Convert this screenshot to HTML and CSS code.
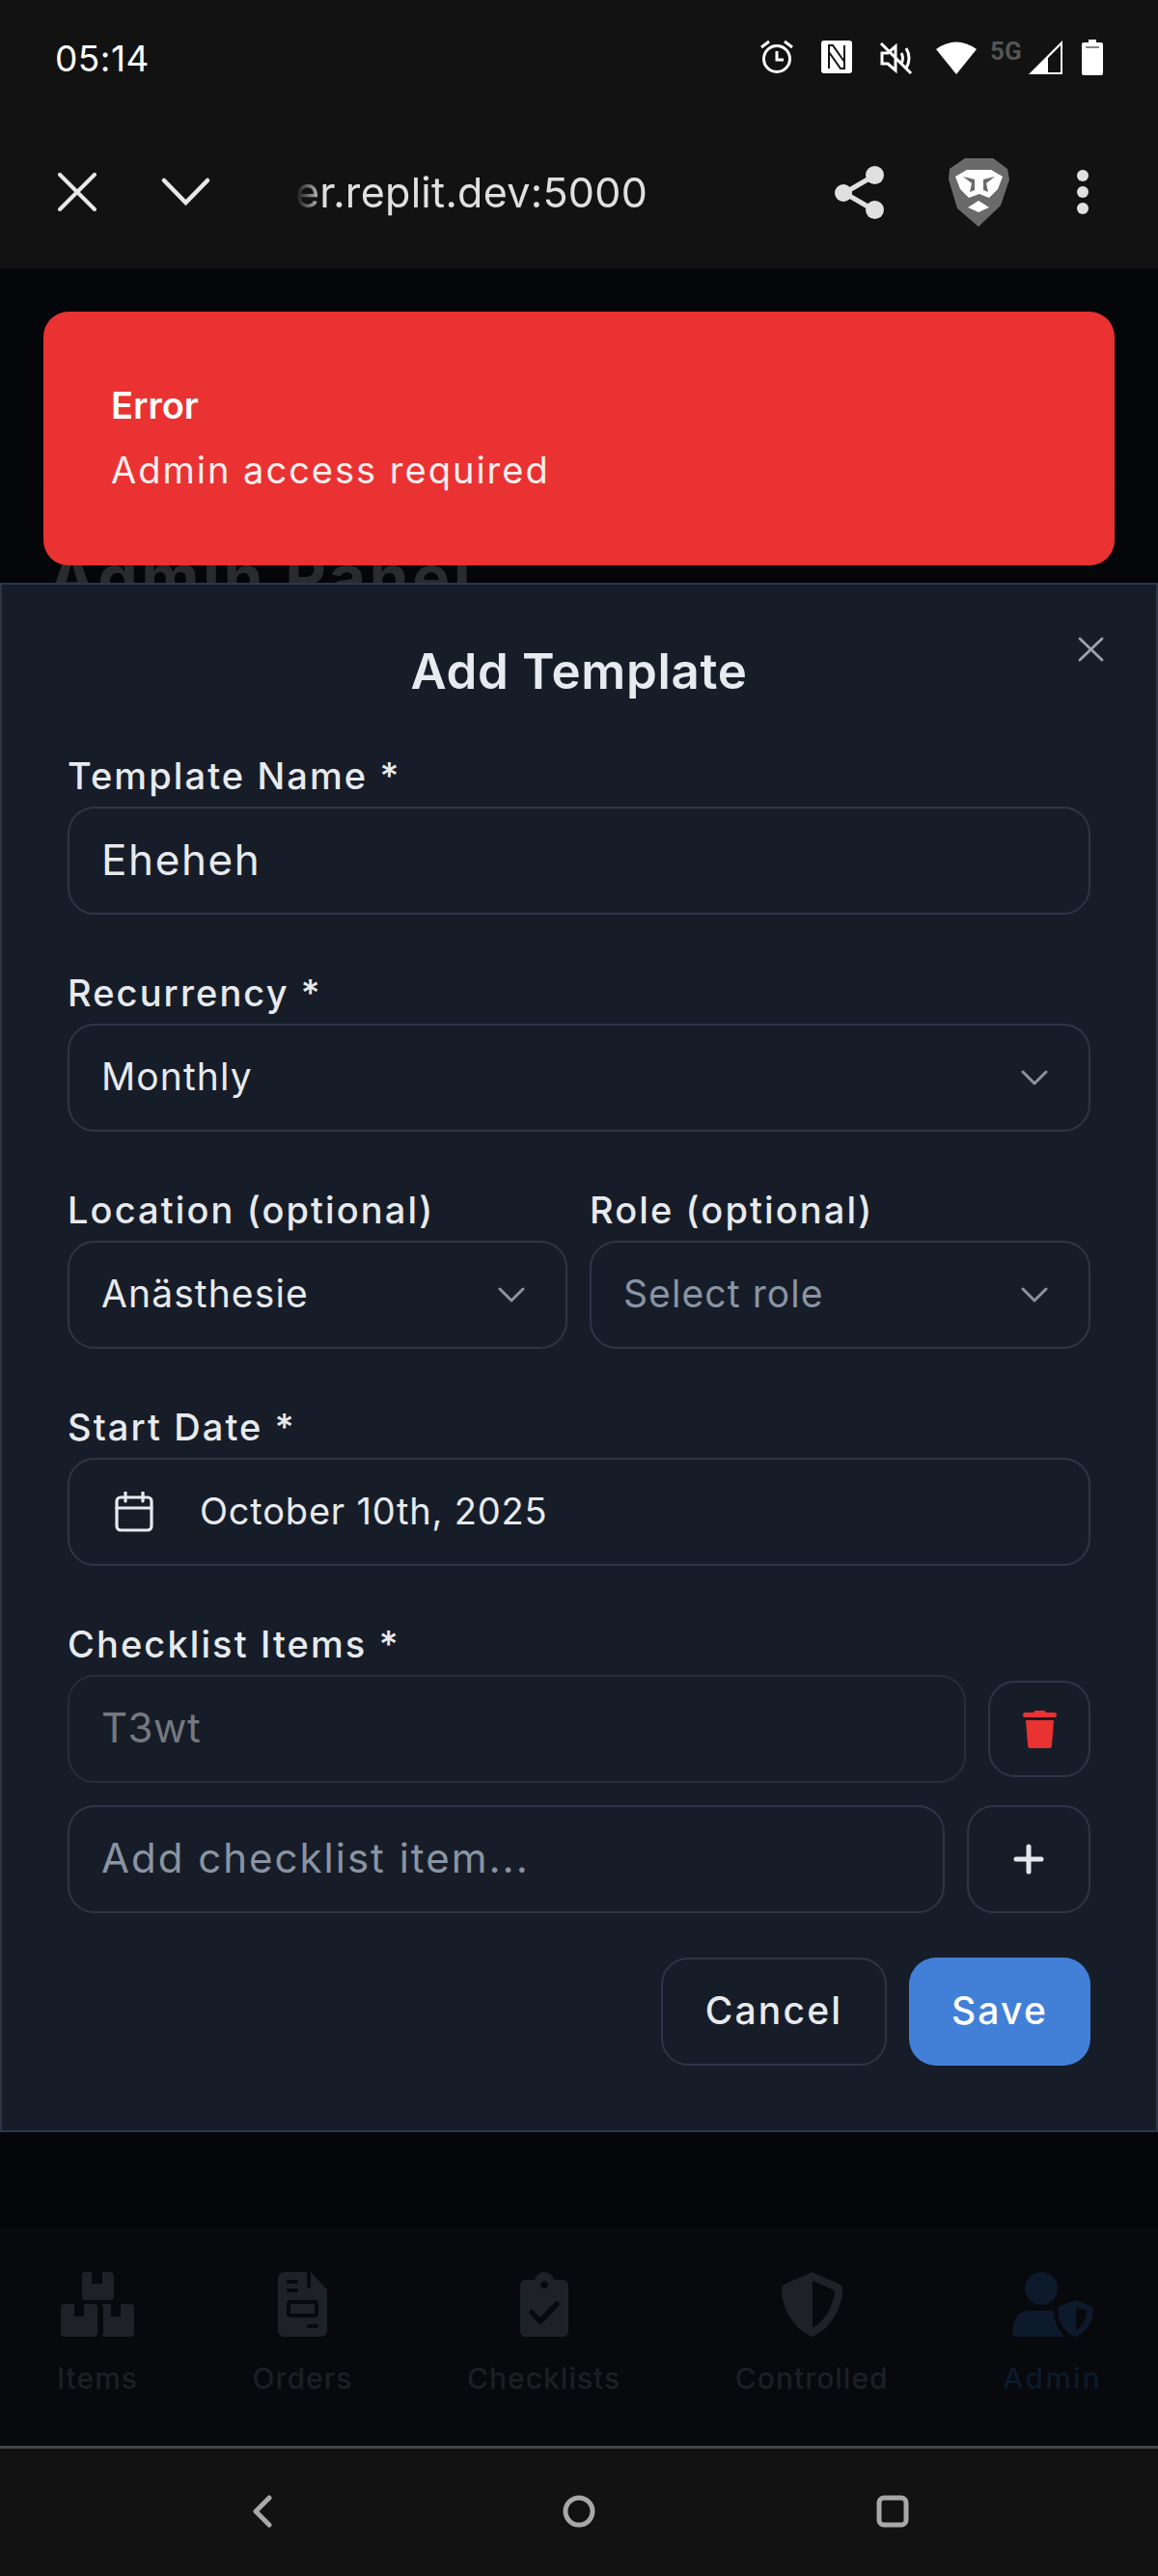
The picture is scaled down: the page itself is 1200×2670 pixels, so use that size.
FILE: index.html
```html
<!DOCTYPE html>
<html lang="en">
<head>
    <meta charset="UTF-8">
    <meta name="viewport" content="width=device-width, initial-scale=1.0">
    <title>Add Template</title>
    <link rel="stylesheet" href="styles.css">
</head>
<body>
    <header class="chrome">
        <div class="status-bar">
            <span class="clock">05:14</span>
            <div class="status-icons">
                <svg width="34" height="35" viewBox="0 0 34 35" fill="none" stroke="#fff" stroke-width="3"><circle cx="17" cy="20" r="13.500"/><path d="M17 12v9h7M1 8l8-6M33 8l-8-6"/></svg>
                <svg class="si-nfc" width="32" height="34" viewBox="0 0 32 34"><rect width="32" height="34" rx="3" fill="#fff"/><path d="M8 29V5h4l12 17M24 5v24h-4L8 12" fill="none" stroke="#121212" stroke-width="2"/></svg>
                <svg class="si-mute" width="36" height="33" viewBox="0 0 36 33" fill="none" stroke="#fff" stroke-width="3"><path d="M3 11h6l8-7v25l-8-7H3zM23 11q3 5 0 11M28 6q6 10 0 21M2 1l31 31"/></svg>
                <svg class="si-wifi" width="42" height="35" viewBox="0 0 42 35"><path d="M0 9Q21-6 42 9L21 35z" fill="#fff"/></svg>
                <span class="net-type">5G</span>
                <svg class="si-signal" width="35" height="35" viewBox="0 0 35 35"><path d="M35 0v35H0zM33 5 20 18v15h13z" fill="#fff" fill-rule="evenodd"/></svg>
                <svg class="si-battery" width="22" height="37" viewBox="0 0 22 37"><path d="M7 0h8v3h5q2 0 2 2v30q0 2-2 2H2q-2 0-2-2V5q0-2 2-2h5z" fill="#fff"/><path d="M4 8h14" stroke="#888" stroke-width="2"/></svg>
            </div>
        </div>
        <div class="toolbar">
            <svg width="40" height="40" viewBox="0 0 40 40" fill="none" stroke="#e8e8e8" stroke-width="4" stroke-linecap="round"><path d="M2 2l36 36M38 2L2 38"/></svg>
            <svg class="tb-down" width="51" height="30" viewBox="0 0 51 30" fill="none" stroke="#e8e8e8" stroke-width="4.500" stroke-linecap="round"><path d="M3 3l22.500 23L48 3"/></svg>
            <span class="url">er.replit.dev:5000</span>
            <svg class="tb-share" width="51" height="55" viewBox="0 0 51 55"><path d="M41 10 10 28l31 18" fill="none" stroke="#e0e0e0" stroke-width="5"/><circle cx="41.500" cy="9.500" r="9.500" fill="#e0e0e0"/><circle cx="9" cy="28" r="9" fill="#e0e0e0"/><circle cx="41.500" cy="45.500" r="9.500" fill="#e0e0e0"/></svg>
            <svg class="tb-brave" width="63" height="72" viewBox="0 0 63 72"><path d="M17 1h29l15 11 2 11-9 27-23 22-22-19-9-30 1-11z" fill="#6a6a6a"/><path d="M7 20l12-7h25l12 7-5 13-9 9-10-4-11 4-9-9z" fill="#fff"/><path d="M15 20l12 3v11l-5 2 2-9zM48 20l-12 3v11l5 2-2-9z" fill="#6a6a6a"/><path d="M31 45l11 7-11 5-11-5z" fill="#fff"/></svg>
            <svg class="tb-menu" width="12" height="46" viewBox="0 0 12 46" fill="#e0e0e0"><circle cx="6" cy="6" r="6"/><circle cx="6" cy="23" r="6"/><circle cx="6" cy="40" r="6"/></svg>
        </div>
    </header>

    <main class="app">
        <div class="app-topbar"></div>
        <h1 class="page-title">Admin Panel</h1>

        <nav class="tabs">
            <div class="tab">
                <svg width="76" height="68" viewBox="0 0 76 68"><path d="M25 0h7v12h11V0h8q4 0 4 4v21q0 4-4 4H26q-4 0-4-4V4q0-4 3-4zM4 33h10v13h10V33h10q4 0 4 4v26q0 4-4 4H4q-4 0-4-4V37q0-4 4-4zM45 33h7v13h10V33h10q4 0 4 4v26q0 4-4 4H42q2-1 2-4V37q0-3-2-4z" fill="#1e2226"/></svg>
                <span>Items</span>
            </div>
            <div class="tab">
                <svg width="51" height="68" viewBox="0 0 51 68"><path fill-rule="evenodd" d="M7 0h23v13q0 4 4 4h17v43q0 7-7 7H7q-7 0-7-7V7q0-7 7-7zM11 8q-2 0-2 2t2 2h8q2 0 2-2t-2-2zM11 17q-2 0-2 2t2 2h8q2 0 2-2t-2-2zM13 29q-4 0-4 4v10q0 4 4 4h25q4 0 4-4V33q0-4-4-4zM32 54q-2 0-2 2t2 2h8q2 0 2-2t-2-2zM34 0l16 17H34z" fill="#1e2226"/><rect x="13" y="33" width="25" height="10" fill="#1e2226"/></svg>
                <span>Orders</span>
            </div>
            <div class="tab">
                <svg width="50" height="68" viewBox="0 0 50 68"><path fill-rule="evenodd" d="M25 0q7 0 10 8h9q6 0 6 6v47q0 6-6 6H6q-6 0-6-6V14q0-6 6-6h9q3-8 10-8zm0 9a4 4 0 1 0 .1 0z" fill="#1e2226"/><path d="M12 42l9 9 17-18" fill="none" stroke="#08090c" stroke-width="5.500" stroke-linecap="round" stroke-linejoin="round"/></svg>
                <span>Checklists</span>
            </div>
            <div class="tab">
                <svg width="63" height="68" viewBox="0 0 63 68"><path fill-rule="evenodd" d="M31.500 0 59 12q4 2 4 6C63 38 50 58 34 66q-2.500 1-5 0C13 58 0 38 0 18q0-4 4-6zM32 9v49c14-8 22-24 23-39z" fill="#1e2226"/></svg>
                <span>Controlled</span>
            </div>
            <div class="tab tab-active">
                <svg width="84" height="68" viewBox="0 0 84 68" fill="#0c1a2b"><ellipse cx="30" cy="17" rx="17" ry="17"/><path d="M20 40h22q2 16 12 27H4q-4 0-4-4 0-23 20-23z"/><path fill-rule="evenodd" d="M65.500 29 81 35q3 1 3 4 0 18-17 28-1 .5-3 0Q47 57 47 39q0-3 3-4zM66 36v25q10-7 11-21z"/></svg>
                <span>Admin</span>
            </div>
        </nav>

        <section class="modal">
            <svg class="modal-close" width="27" height="26" viewBox="0 0 27 26" fill="none" stroke="#9ca3af" stroke-width="2.800" stroke-linecap="round"><path d="M2 2l23 22M25 2L2 24"/></svg>
            <h2 class="modal-title">Add Template</h2>

            <div class="field">
                <label>Template Name *</label>
                <div class="input input-name">Eheheh</div>
            </div>

            <div class="field">
                <label>Recurrency *</label>
                <div class="input select">
                    <span>Monthly</span>
                    <svg width="28" height="16" viewBox="0 0 28 16" fill="none" stroke="#8b929c" stroke-width="3" stroke-linecap="round" stroke-linejoin="round"><path d="M2 2l12 12L26 2"/></svg>
                </div>
            </div>

            <div class="field-row">
                <div class="field">
                    <label>Location (optional)</label>
                    <div class="input select">
                        <span>Anästhesie</span>
                        <svg width="28" height="16" viewBox="0 0 28 16" fill="none" stroke="#8b929c" stroke-width="3" stroke-linecap="round" stroke-linejoin="round"><path d="M2 2l12 12L26 2"/></svg>
                    </div>
                </div>
                <div class="field">
                    <label>Role (optional)</label>
                    <div class="input select">
                        <span class="placeholder">Select role</span>
                        <svg width="28" height="16" viewBox="0 0 28 16" fill="none" stroke="#8b929c" stroke-width="3" stroke-linecap="round" stroke-linejoin="round"><path d="M2 2l12 12L26 2"/></svg>
                    </div>
                </div>
            </div>

            <div class="field">
                <label>Start Date *</label>
                <div class="input date">
                    <svg width="42" height="42" viewBox="0 0 42 42" fill="none" stroke="#e7eaee" stroke-width="3.200" stroke-linecap="round" stroke-linejoin="round"><rect x="3" y="6" width="36" height="34" rx="4"/><path d="M3 17h36M12 1v9M30 1v9"/></svg>
                    <span>October 10th, 2025</span>
                </div>
            </div>

            <div class="field field-last">
                <label>Checklist Items *</label>
                <div class="item-row">
                    <div class="input input-disabled">T3wt</div>
                    <button class="icon-btn delete-btn">
                        <svg width="35" height="39" viewBox="0 0 35 39" fill="#e93232"><path d="M11 2q0-2 3-2h7q3 0 3 2h9q2 0 2 2.500T33 7H2Q0 7 0 4.500T2 2zM3 10h29l-2 26q0 3-3 3H8q-3 0-3-3z"/></svg>
                    </button>
                </div>
                <div class="item-row">
                    <div class="input input-add">Add checklist item...</div>
                    <button class="icon-btn add-btn">
                        <svg width="32" height="32" viewBox="0 0 32 32" fill="none" stroke="#e3e6ec" stroke-width="5" stroke-linecap="round"><path d="M16 3v26M3 16h26"/></svg>
                    </button>
                </div>
            </div>

            <div class="actions">
                <button class="btn btn-cancel">Cancel</button>
                <button class="btn btn-save">Save</button>
            </div>
        </section>

        <div class="toast">
            <strong>Error</strong>
            <p>Admin access required</p>
        </div>
    </main>

    <footer class="android-nav">
        <svg width="22" height="34" viewBox="0 0 22 34" fill="none" stroke="#a8a8a8" stroke-width="5" stroke-linecap="round" stroke-linejoin="round"><path d="M18 3 4 17l14 14"/></svg>
        <svg class="nav-home" width="34" height="34" viewBox="0 0 34 34" fill="none" stroke="#a8a8a8" stroke-width="5"><circle cx="17" cy="17" r="14"/></svg>
        <svg class="nav-recent" width="34" height="34" viewBox="0 0 34 34" fill="none" stroke="#a8a8a8" stroke-width="5"><rect x="3" y="3" width="28" height="28" rx="5"/></svg>
    </footer>
</body>
</html>
```

FILE: styles.css
```css
* {
    box-sizing: border-box;
}
html, body {
    margin: 0;
    padding: 0;
}
body {
    width: 1200px;
    height: 2670px;
    display: flex;
    flex-direction: column;
    font-family: Inter, "Noto Sans", sans-serif;
    background: #04060a;
    color: #e7eaee;
    overflow: hidden;
}

/* browser chrome */
.chrome {
    height: 278px;
    background: #121212;
    color: #fff;
}
.status-bar {
    height: 118px;
    padding: 41px 57px 0 57px;
    display: flex;
    justify-content: space-between;
    align-items: flex-start;
}
.clock {
    font-size: 37px;
    line-height: 40px;
    letter-spacing: 0.5px;
}
.status-icons {
    display: flex;
    align-items: flex-start;
}
.si-nfc {
    margin: 1px 0 0 29px;
}
.si-mute {
    margin: 3px 0 0 28px;
}
.si-wifi {
    margin: 1px 0 0 23px;
}
.net-type {
    margin-left: 14px;
    width: 32px;
    font-family: Roboto, sans-serif;
    font-weight: 700;
    font-size: 26px;
    line-height: 24px;
    color: #555;
}
.si-signal {
    margin: 1px 0 0 8px;
}
.si-battery {
    margin: 0 0 0 20px;
}
.toolbar {
    height: 160px;
    display: flex;
    align-items: center;
    padding: 2px 72px 0 60px;
    color: #e0e0e0;
}
.tb-down {
    margin-left: 67px;
}
.url {
    margin-left: 88px;
    font-size: 43px;
    letter-spacing: 0.3px;
    -webkit-mask-image: linear-gradient(to right, transparent 0, #000 30px);
    mask-image: linear-gradient(to right, transparent 0, #000 30px);
}
.tb-share {
    margin-left: auto;
}
.tb-brave {
    margin-left: 67px;
}
.tb-menu {
    margin-left: 70px;
}

/* app behind the dialog */
.app {
    flex: 1;
    position: relative;
    display: flex;
    flex-direction: column;
    background: #04060a;
}
.app-topbar {
    height: 225px;
    border-bottom: 1px solid #0a0d11;
}
.page-title {
    margin: 0;
    padding: 57px 0 0 50px;
    font-size: 66px;
    line-height: 76px;
    letter-spacing: 3.5px;
    color: #2a2b2e;
    font-weight: 700;
}
.tabs {
    margin-top: auto;
    height: 225px;
    display: flex;
    justify-content: space-between;
    padding: 44px 58px 0 59px;
    background: #07090c;
    border-top: 1px solid #0b0d10;
}
.tab {
    display: flex;
    flex-direction: column;
    align-items: center;
    gap: 24px;
    font-size: 30px;
    font-weight: 500;
    letter-spacing: 1px;
    color: #1c1f24;
}
.tab-active {
    color: #0c1a2b;
    letter-spacing: 2.2px;
}

/* dialog */
.modal {
    position: absolute;
    top: 326px;
    left: 0;
    width: 1200px;
    height: 1606px;
    padding: 0 68px;
    background: #171d28;
    border: 2px solid #2b3648;
}
.modal-close {
    position: absolute;
    top: 54px;
    right: 54px;
}
.modal-title {
    margin: 0;
    padding-top: 58px;
    height: 172px;
    text-align: center;
    font-size: 51px;
    line-height: 64px;
    font-weight: 600;
    letter-spacing: 0.7px;
}
.field {
    margin-bottom: 55px;
}
.field label {
    display: block;
    height: 58px;
    font-size: 38px;
    line-height: 52px;
    font-weight: 500;
    letter-spacing: 2.1px;
}
.input {
    height: 112px;
    border: 2px solid #2d3648;
    border-radius: 28px;
    padding: 0 33px 3px;
    display: flex;
    align-items: center;
    font-size: 42px;
    color: #e7eaee;
}
.input-name {
    font-size: 44px;
    letter-spacing: 1.6px;
}
.select {
    justify-content: space-between;
    padding-right: 42px;
    font-size: 39px;
    letter-spacing: 1.1px;
}
.select svg {
    margin-top: 3px;
}
.placeholder {
    color: #8a94a3;
}
.field-row {
    display: grid;
    grid-template-columns: 518px 519px;
    gap: 23px;
}
.date {
    padding-left: 46px;
    gap: 47px;
    font-size: 38px;
    letter-spacing: 0.8px;
}
.date svg {
    margin-top: 3px;
}
.field-last {
    margin-bottom: 46px;
}
.item-row {
    display: flex;
    align-items: center;
    gap: 23px;
}
.item-row + .item-row {
    margin-top: 23px;
}
.item-row .input {
    flex: 1;
}
.input-disabled {
    border-color: #262d3c;
    color: #75797f;
    letter-spacing: 0.5px;
}
.input-add {
    color: #8a94a3;
    letter-spacing: 2px;
}
.icon-btn {
    display: flex;
    align-items: center;
    justify-content: center;
    padding: 0;
    background: transparent;
    border: 2px solid #2d3648;
    border-radius: 28px;
}
.delete-btn {
    width: 106px;
    height: 100px;
}
.add-btn {
    width: 128px;
    height: 112px;
}
.actions {
    display: flex;
    justify-content: flex-end;
    gap: 23px;
}
.btn {
    height: 112px;
    padding: 0 0 3px;
    border-radius: 28px;
    font-family: inherit;
    font-size: 39px;
    font-weight: 500;
    letter-spacing: 2.2px;
    color: #e7eaee;
}
.btn-cancel {
    width: 234px;
    background: transparent;
    border: 2px solid #2d3648;
}
.btn-save {
    width: 188px;
    background: #4280d8;
    border: 0;
    color: #fff;
}

/* toast */
.toast {
    position: absolute;
    top: 45px;
    left: 45px;
    width: 1110px;
    height: 263px;
    padding: 70px 70px 0;
    background: #ea3232;
    border-radius: 26px;
    color: #fff;
}
.toast strong {
    display: block;
    font-size: 38px;
    line-height: 54px;
    font-weight: 600;
}
.toast p {
    margin: 13px 0 0;
    font-size: 38px;
    line-height: 54px;
    letter-spacing: 2px;
    color: #fdeeee;
}

/* android nav */
.android-nav {
    height: 135px;
    border-top: 3px solid #454545;
    background: #121212;
    display: flex;
    align-items: center;
    padding: 0 0 2px 261px;
}
.nav-home {
    margin-left: 300px;
}
.nav-recent {
    margin-left: 291px;
}
```
